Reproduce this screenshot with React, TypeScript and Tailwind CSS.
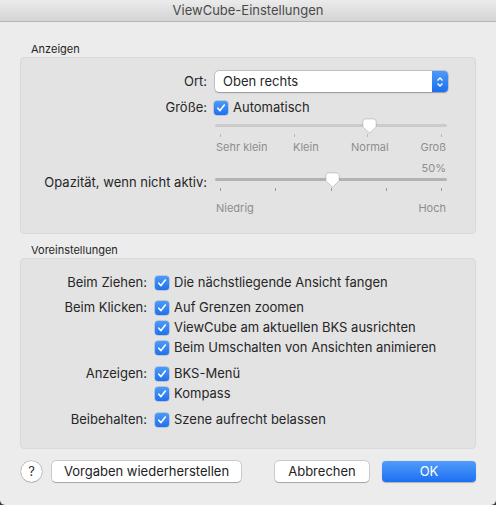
import React from 'react';

const font = { fontFamily: 'Inter, "Noto Sans", sans-serif' };

function Check() {
  return (
    <span className="flex h-[14px] w-[14px] shrink-0 items-center justify-center rounded-[3px] bg-gradient-to-b from-[#4a9bfb] to-[#1f71ec] shadow-[0_0_0_0.5px_rgba(0,60,160,0.35)]">
      <svg width="10" height="10" viewBox="0 0 10 10">
        <path d="M1.8 5.2 L4 7.6 L8.3 2" fill="none" stroke="white" strokeWidth="1.6" strokeLinecap="round" strokeLinejoin="round" />
      </svg>
    </span>
  );
}

function CheckRow({ label, text, className = '' }: { label?: string; text: string; className?: string }) {
  return (
    <div className={`flex h-[20px] items-center ${className}`}>
      <div className="w-[126px] text-right">{label}</div>
      <div className="ml-[8px] flex items-center gap-[5px]">
        <Check />
        <span>{text}</span>
      </div>
    </div>
  );
}

function Thumb() {
  return (
    <svg width="15" height="16" viewBox="0 0 15 16" className="drop-shadow-[0_0.5px_0.5px_rgba(0,0,0,0.25)]">
      <path d="M1 3.5 Q1 1 3.5 1 H11.5 Q14 1 14 3.5 V9 L7.5 15 L1 9 Z" fill="white" stroke="#c4c4c4" strokeWidth="0.6" />
    </svg>
  );
}

function Slider({ ticks, pos, light }: { ticks: number; pos: number; light?: boolean }) {
  return (
    <div className="w-[232px]">
      <div className="relative h-[16px]">
        <div className={`absolute left-0 right-0 top-[6px] h-[3px] rounded-full ${light ? 'bg-[#cbcbcb]' : 'bg-[#b3b3b3]'}`} />
        <div className="absolute top-0" style={{ left: pos - 7.5 }}>
          <Thumb />
        </div>
      </div>
      <div className="flex h-[4px] justify-between px-[5px]">
        {Array.from({ length: ticks }).map((_, i) => (
          <div key={i} className={`h-[3px] w-[1px] ${light ? 'bg-[#b8b8b8]' : 'bg-[#9a9a9a]'}`} />
        ))}
      </div>
    </div>
  );
}

function Button({ children, className = '' }: { children: React.ReactNode; className?: string }) {
  return (
    <div className={`flex h-[21px] items-center justify-center rounded-[4px] bg-white text-[13px] text-[#222] shadow-[0_0_0_0.5px_rgba(0,0,0,0.25),0_0.5px_1px_rgba(0,0,0,0.2)] ${className}`}>
      {children}
    </div>
  );
}

export default function App() {
  return (
    <div className="h-[505px] w-[496px] bg-[#3a3a3a]" style={font}>
      <div className="flex h-full w-full flex-col overflow-hidden rounded-b-[5px] bg-[#ececec] text-[13px] text-[#262626]">
        {/* title bar */}
        <div className="flex h-[22px] shrink-0 items-center justify-center border-b border-[#b4b4b4] bg-gradient-to-b from-[#ebebeb] to-[#d4d4d4] text-[13px] text-[#4a4a4a]">
          ViewCube-Einstellungen
        </div>

        <div className="px-[20px]">
          <div className="mt-[20px] h-[14px] pl-[11px] text-[11px] leading-[14px]">Anzeigen</div>
          <div className="mt-[1px] h-[177px] rounded-[4px] border border-[#d9d9d9] bg-[#e3e3e3]">
            {/* Ort */}
            <div className="mt-[13px] flex h-[21px] items-center">
              <div className="w-[186px] text-right">Ort:</div>
              <div className="ml-[8px] flex h-[21px] w-[233px] items-center overflow-hidden rounded-[4px] bg-white shadow-[0_0_0_0.5px_rgba(0,0,0,0.22),0_0.5px_1.5px_rgba(0,0,0,0.25)]">
                <span className="flex-1 pl-[8px]">Oben rechts</span>
                <span className="flex h-full w-[16px] items-center justify-center bg-gradient-to-b from-[#4d9afa] to-[#1a6ff0]">
                  <svg width="8" height="12" viewBox="0 0 8 12">
                    <path d="M1.5 4.5 L4 2 L6.5 4.5 M1.5 7.5 L4 10 L6.5 7.5" fill="none" stroke="white" strokeWidth="1.3" />
                  </svg>
                </span>
              </div>
            </div>
            {/* Größe */}
            <div className="mt-[6px] flex h-[20px] items-center">
              <div className="w-[186px] text-right">Größe:</div>
              <div className="ml-[7px] flex items-center gap-[5px]">
                <Check />
                <span>Automatisch</span>
              </div>
            </div>
            {/* size slider */}
            <div className="flex">
              <div className="ml-[194px]">
                <Slider ticks={4} pos={154} light />
                <div className="mt-[2px] flex text-[11px] leading-[14px] text-[#8e8e8e]">
                  <span className="w-[78px] pl-[1px]">Sehr klein</span>
                  <span className="w-[58px]">Klein</span>
                  <span className="flex-1">Normal</span>
                  <span className="pr-[1px]">Groß</span>
                </div>
              </div>
            </div>
            {/* opacity */}
            <div className="mt-[7px] flex">
              <div className="ml-[194px] w-[232px] pr-[1px] text-right text-[11px] leading-[14px] text-[#8e8e8e]">50%</div>
            </div>
            <div className="mt-[-3px] flex items-start">
              <div className="mt-[2px] w-[186px] text-right leading-[16px]">Opazität, wenn nicht aktiv:</div>
              <div className="ml-[8px]">
                <Slider ticks={5} pos={117} />
                <div className="mt-[9px] flex justify-between text-[11px] leading-[14px] text-[#8e8e8e]">
                  <span className="pl-[1px]">Niedrig</span>
                  <span className="pr-[1px]">Hoch</span>
                </div>
              </div>
            </div>
          </div>

          <div className="mt-[9px] h-[14px] pl-[11px] text-[11px] leading-[14px]">Voreinstellungen</div>
          <div className="mt-[1px] h-[191px] rounded-[4px] border border-[#d9d9d9] bg-[#e3e3e3] pt-[14px]">
            <CheckRow label="Beim Ziehen:" text="Die nächstliegende Ansicht fangen" />
            <CheckRow label="Beim Klicken:" text="Auf Grenzen zoomen" className="mt-[5px]" />
            <CheckRow text="ViewCube am aktuellen BKS ausrichten" />
            <CheckRow text="Beim Umschalten von Ansichten animieren" />
            <CheckRow label="Anzeigen:" text="BKS-Menü" className="mt-[6px]" />
            <CheckRow text="Kompass" />
            <CheckRow label="Beibehalten:" text="Szene aufrecht belassen" className="mt-[6px]" />
          </div>

          <div className="mt-[12px] flex items-center">
            <div className="ml-[1px] flex h-[21px] w-[21px] items-center justify-center rounded-full bg-white text-[13px] text-[#333] shadow-[0_0_0_0.5px_rgba(0,0,0,0.25),0_0.5px_1px_rgba(0,0,0,0.2)]">
              ?
            </div>
            <Button className="ml-[10px] w-[189px]">Vorgaben wiederherstellen</Button>
            <Button className="ml-auto w-[94px]">Abbrechen</Button>
            <div className="ml-[13px] flex h-[21px] w-[94px] items-center justify-center rounded-[4px] bg-gradient-to-b from-[#519cfb] to-[#1b6ff1] text-[13px] text-white shadow-[0_0.5px_1px_rgba(0,0,0,0.25)]">
              OK
            </div>
          </div>
        </div>
      </div>
    </div>
  );
}
